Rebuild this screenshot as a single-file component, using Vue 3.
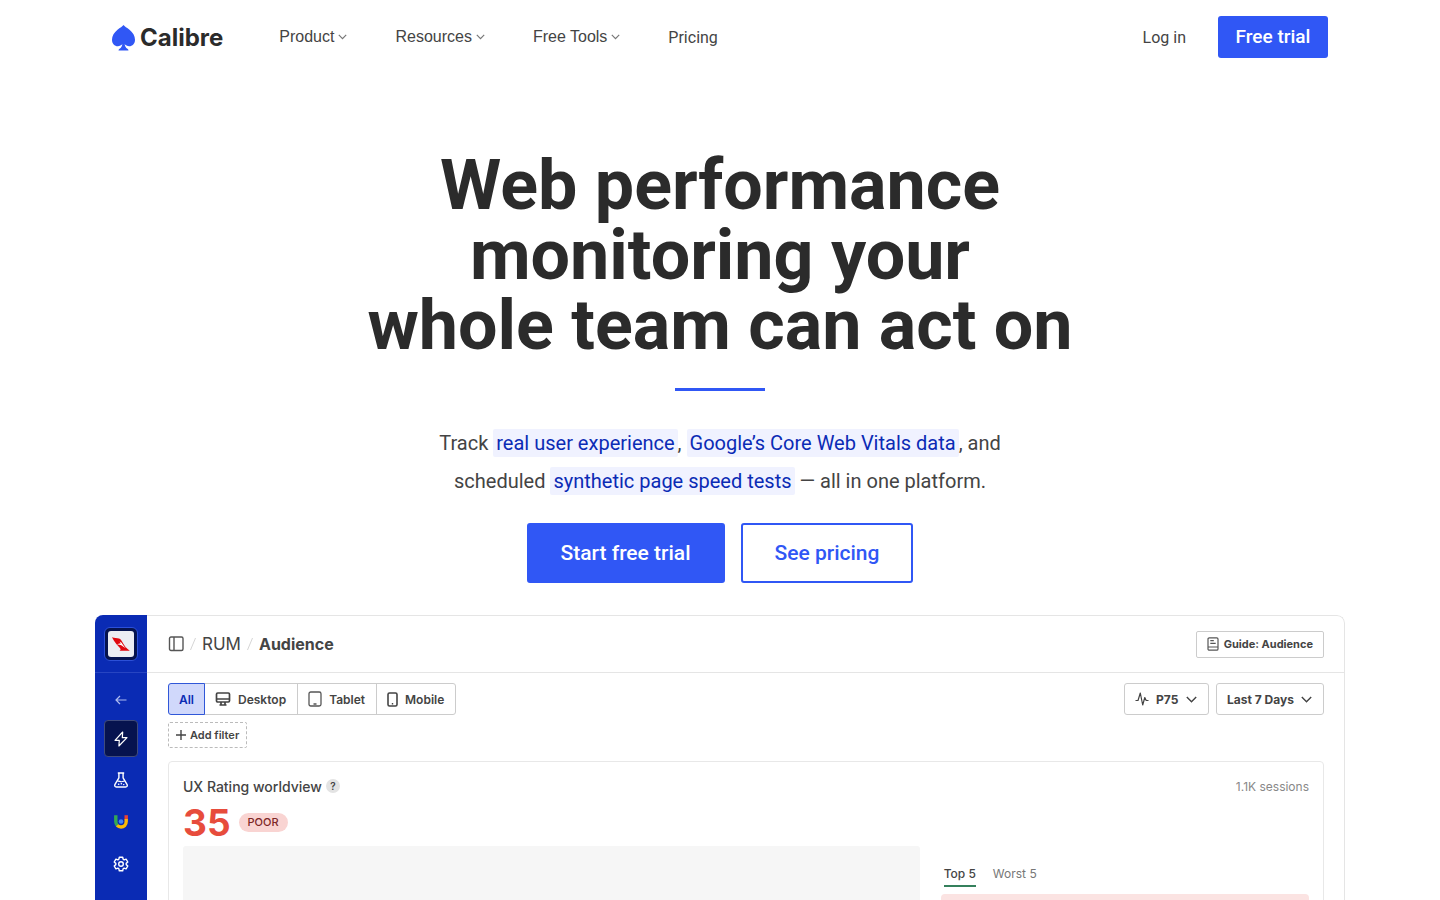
<script setup>
import { ref } from 'vue'

const menus = ['Product', 'Resources', 'Free Tools']
const devices = ['All', 'Desktop', 'Tablet', 'Mobile']
const device = ref('All')
const percentile = ref('P75')
const period = ref('Last 7 Days')
const tab = ref('Top 5')
</script>

<template>
  <div class="page">
    <header class="header">
      <a href="#" class="logo">
        <svg width="23" height="26" viewBox="0 0 23 26" fill="#3057f5">
          <path d="M11.5 0C10.5 1.5 8 2.7 5.5 4.8 2.200 7.600 0 11 0 14.700c0 4 2.600 6.500 5.800 6.500 1.900 0 3.500-.8 4.500-2.100-.1 2-1.100 3.900-2.700 4.700-.7.400-1.100.900-1.100 1.600h10c0-.7-.4-1.200-1.100-1.600-1.600-.8-2.600-2.700-2.700-4.700 1 1.300 2.600 2.100 4.500 2.100 3.200 0 5.800-2.500 5.800-6.500 0-3.700-2.200-7.100-5.500-9.900C15 2.700 12.500 1.500 11.500 0Z" />
        </svg>
        <span>Calibre</span>
      </a>
      <nav class="nav">
        <button v-for="item in menus" :key="item" type="button" class="menu" aria-haspopup="true">
          {{ item }}
          <svg width="9" height="6" viewBox="0 0 9 6" fill="none" stroke="#777"><path d="M.8.900 4.500 4.600 8.200.900" stroke-width="1.200" /></svg>
        </button>
        <a href="#" class="plain">Pricing</a>
      </nav>
      <a href="#" class="plain login">Log in</a>
      <a href="#" class="trial">Free trial</a>
    </header>

    <main>
      <section class="hero">
        <h1>Web performance<br>monitoring your<br>whole team can act on</h1>
        <hr>
        <p>
          Track <a href="#">real user experience</a>, <a href="#">Google’s Core Web Vitals data</a>, and<br>
          scheduled <a href="#">synthetic page speed tests</a> — all in one platform.
        </p>
        <div class="actions">
          <a href="#" class="cta filled">Start free trial</a>
          <a href="#" class="cta">See pricing</a>
        </div>
      </section>

      <section class="app">
        <aside class="side">
          <div class="team">
            <a href="#" class="team-logo" aria-label="Team">
              <svg width="26" height="26" viewBox="0 0 26 26">
                <path d="M4 6.200c2.500.8 5 .6 7 1.300 1.600.6 2.400 1.900 3.200 3.300 1.800 3.400 4 6.800 7.600 8.900H11.500c1.600-.6 1.300-1.700.2-2.900L8.300 13C6.600 11 5.200 8.600 4 6.200Z" fill="#e0070f" />
                <path d="M9 13.200c1.300-.2 2.400-.9 3.800-.8l-1.200-1.900c1.200.5 2.200 1.500 2.900 2.700 1 1.500 2.200 2.900 3.500 4-1.700-.7-3-1.900-4.300-2.700-1.500-.8-3.200-.8-4.700-1.300Z" fill="#fff" />
              </svg>
            </a>
          </div>
          <nav class="side-nav">
            <a href="#" class="back" aria-label="Back">
              <svg width="12" height="10" viewBox="0 0 12 10" fill="none" stroke="#aebcf0" stroke-width="1.200"><path d="M11.500 5H1M5 1 1 5l4 4" /></svg>
            </a>
            <a href="#" class="active" aria-label="Real user metrics">
              <svg width="14" height="16" viewBox="0 0 14 16" fill="none" stroke="#fff" stroke-width="1.200" stroke-linejoin="round"><path d="M8.700 1 1 9.300h4.300L4.900 15 13 6.700H8.300L8.700 1Z" /></svg>
            </a>
            <a href="#" aria-label="Synthetic tests">
              <svg width="14" height="16" viewBox="0 0 14 16" fill="none" stroke="#fff" stroke-width="1.400" stroke-linejoin="round">
                <path d="M3.800 1h6.400M4.900 1v4.800L1 12.400c-.7 1.400 0 2.600 1.300 2.600h9.400c1.300 0 2-1.200 1.300-2.600L9.100 5.800V1" />
                <path d="M3.400 9.200c1.800-.6 3 .9 4.700.4.900-.3 1.600-.6 2.500-.4" stroke-width="1.100" />
                <path d="M4.500 12.300h.3M7.200 11.800h.3M9.600 12.600h.2" stroke-linecap="round" />
              </svg>
            </a>
            <a href="#" aria-label="Chrome UX report">
              <svg width="16" height="16" viewBox="0 0 16 16" fill="none" stroke-width="3.400">
                <path d="M2.800 1.200v6.300c0 1.700.6 3 1.600 4" stroke="#34a853" />
                <path d="M13.200 1.200v4.300" stroke="#ea4335" />
                <path d="M13.200 5v2.500c0 3.300-2.300 5.500-5.200 5.500-1.600 0-2.900-.6-3.900-1.600" stroke="#fbbc04" />
                <circle cx="8" cy="7.500" r="2.300" fill="#4285f4" />
              </svg>
            </a>
            <a href="#" aria-label="Settings">
              <svg width="16" height="16" viewBox="0 0 16 16" fill="none" stroke="#fff" stroke-width="1.400" stroke-linejoin="round">
                <path d="M6.300 1.200h3.400l.4 2 1 .6 2-.7 1.700 2.900-1.600 1.400v1.200l1.600 1.400-1.700 2.900-2-.7-1 .6-.4 2H6.300l-.4-2-1-.6-2 .7L1.200 10l1.600-1.400V7.400L1.200 6l1.700-2.900 2 .7 1-.6.4-2Z" />
                <circle cx="8" cy="8" r="2.300" />
              </svg>
            </a>
          </nav>
        </aside>

        <div class="content">
          <div class="topbar">
            <button type="button" class="toggle" aria-label="Toggle sidebar">
              <svg width="16" height="16" viewBox="0 0 16 16" fill="none" stroke="#555" stroke-width="1.400"><rect x="1.500" y="1" width="13.500" height="13.500" rx="1.500" /><path d="M6 1v13.500" /></svg>
            </button>
            <svg class="slash" width="8" height="14" viewBox="0 0 8 14" stroke="#d5d5d5"><path d="m1.500 13 5-12" /></svg>
            <a href="#" class="crumb">RUM</a>
            <svg class="slash" width="8" height="14" viewBox="0 0 8 14" stroke="#d5d5d5"><path d="m1.500 13 5-12" /></svg>
            <h2>Audience</h2>
            <a href="#" class="guide">
              <svg width="12" height="14" viewBox="0 0 12 14" fill="none" stroke="#555" stroke-width="1.200">
                <rect x="1" y=".8" width="10" height="12.400" rx="1.300" /><path d="M1 10h10M3.300 3.600h3.500M3.300 6.400h5.400" />
              </svg>
              Guide: Audience
            </a>
          </div>

          <div class="filters">
            <div class="segments">
              <button v-for="d in devices" :key="d" type="button" :class="{ on: device === d }" @click="device = d">
                <svg v-if="d === 'Desktop'" width="16" height="14" viewBox="0 0 16 14" fill="none" stroke="#444" stroke-width="1.700"><rect x="1.500" y="1" width="13" height="9" rx="1.200" /><path d="M1.500 7h13M6 10v2.500M10 10v2.500M4.500 13h7" /></svg>
                <svg v-if="d === 'Tablet'" width="14" height="16" viewBox="0 0 14 16" fill="none" stroke="#555" stroke-width="1.300"><rect x="1" y="1" width="12" height="14" rx="1.800" /><path d="M5.500 13h3" /></svg>
                <svg v-if="d === 'Mobile'" width="11" height="15" viewBox="0 0 11 15" fill="none" stroke="#444" stroke-width="1.600"><rect x="1" y="1" width="9" height="13" rx="1.500" /><path d="M4.800 11.800h1.400" /></svg>
                {{ d }}
              </button>
            </div>
            <div class="selects">
              <div class="select">
                <svg width="14" height="14" viewBox="0 0 14 14" fill="none" stroke="#444" stroke-width="1.200" stroke-linejoin="round"><path d="M.5 8.500H3L5.300 1l2.400 12L9.800 5.500l1.400 3h2.300" /></svg>
                <select v-model="percentile" aria-label="Percentile">
                  <option>P75</option>
                </select>
                <svg width="11" height="7" viewBox="0 0 11 7" fill="none" stroke="#444" stroke-width="1.400"><path d="m.8 1 4.700 4.800L10.200 1" /></svg>
              </div>
              <div class="select">
                <select v-model="period" aria-label="Period">
                  <option>Last 7 Days</option>
                </select>
                <svg width="11" height="7" viewBox="0 0 11 7" fill="none" stroke="#444" stroke-width="1.400"><path d="m.8 1 4.700 4.800L10.200 1" /></svg>
              </div>
            </div>
          </div>

          <button type="button" class="add">
            <svg width="10" height="10" viewBox="0 0 10 10" stroke="#444" stroke-width="1.400"><path d="M5 0v10M0 5h10" /></svg>
            Add filter
          </button>

          <div class="card">
            <div class="card-head">
              <h3>UX Rating worldview</h3>
              <button type="button" class="help">?</button>
              <span class="sessions">1.1K sessions</span>
            </div>
            <div class="score">
              <strong>35</strong>
              <span class="badge">POOR</span>
            </div>
            <div class="body">
              <div class="map"></div>
              <div class="ranking">
                <div class="tabs">
                  <button v-for="t in ['Top 5', 'Worst 5']" :key="t" type="button" :class="{ on: tab === t }" @click="tab = t">{{ t }}</button>
                </div>
                <div class="row"></div>
              </div>
            </div>
          </div>
        </div>
      </section>
    </main>
  </div>
</template>

<style>
body {
  background: #fff;
}
</style>

<style scoped>
* {
  box-sizing: border-box;
}

.page {
  color: #444;
  font-family: Roboto, "Liberation Sans", sans-serif;
  font-size: 16px;
}

a {
  color: inherit;
  text-decoration: none;
}

button,
select {
  margin: 0;
  padding: 0;
  border: 0;
  background: none;
  color: inherit;
  font: inherit;
  cursor: pointer;
}

svg {
  display: block;
  flex: none;
}

/* header */
.header {
  display: flex;
  align-items: center;
  height: 74px;
  padding: 0 112px;
}

.logo {
  display: flex;
  align-items: center;
  gap: 5px;
  padding-top: 2px;
  color: #2b2b2b;
  font: 700 24px/32px Inter, sans-serif;
}

.nav {
  display: flex;
  align-items: center;
  gap: 48px;
  margin-left: 56px;
}

.menu {
  display: flex;
  align-items: center;
  gap: 4px;
  font: 16px/20px "Liberation Sans", Arial, sans-serif;
}

.plain {
  padding-top: 2px;
  line-height: 20px;
}

.login {
  margin-left: auto;
}

.trial {
  margin-left: 32px;
  width: 110px;
  border-radius: 3px;
  background: #3057f5;
  color: #fff;
  font-size: 19px;
  font-weight: 500;
  line-height: 42px;
  text-align: center;
}

/* hero */
.hero {
  display: flex;
  flex-direction: column;
  align-items: center;
  padding: 76px 0 32px;
  text-align: center;
}

h1 {
  margin: 0;
  color: #2b2b2b;
  font-size: 70px;
  font-weight: 700;
  line-height: 70px;
}

hr {
  width: 90px;
  height: 3px;
  margin: 28px 0 33px;
  border: 0;
  background: #3057f5;
}

.hero p {
  margin: 0;
  font-size: 20px;
  line-height: 38px;
}

.hero p a {
  padding: 2px 3px;
  border-radius: 2px;
  background: #f0f2ff;
  color: #0b2bb5;
}

.actions {
  display: flex;
  gap: 16px;
  margin-top: 23px;
}

.cta {
  padding: 0 32px;
  border: 2px solid #3057f5;
  border-radius: 3px;
  color: #3057f5;
  font-size: 21px;
  font-weight: 500;
  line-height: 56px;
}

.filled {
  background: #3057f5;
  color: #fff;
}

/* product preview */
.app {
  display: flex;
  max-width: 1250px;
  margin: 0 auto;
  overflow: hidden;
  border-radius: 8px 8px 0 0;
  font-family: Inter, sans-serif;
  font-size: 12px;
  font-weight: 600;
}

.side {
  width: 52px;
  background: #0a2bb4;
}

.team {
  display: flex;
  align-items: center;
  justify-content: center;
  height: 58px;
  border-bottom: 1px solid #2745c2;
}

.team-logo {
  padding: 3px;
  border: 1px solid #2c50d8;
  border-radius: 6px;
  background: #06134f;
}

.team-logo svg {
  border-radius: 3px;
  background: #ecedf3;
}

.side-nav {
  display: flex;
  flex-direction: column;
  align-items: center;
  gap: 4px;
  padding-top: 11px;
}

.side-nav a {
  display: flex;
  align-items: center;
  justify-content: center;
  width: 34px;
  height: 38px;
}

.side-nav .back {
  height: 32px;
}

.side-nav .active {
  height: 37px;
  border: 1px solid #3f4b7c;
  border-radius: 4px;
  background: #06134f;
}

.content {
  flex: 1;
  min-width: 0;
  border: 1px solid #e5e5e5;
  border-width: 1px 1px 0 0;
  border-radius: 0 8px 0 0;
}

.topbar {
  display: flex;
  align-items: center;
  height: 57px;
  padding: 0 20px 0 21px;
  border-bottom: 1px solid #e5e5e5;
}

.slash {
  margin: 0 5px;
}

.crumb {
  font-size: 17px;
  font-weight: 400;
}

h2 {
  margin: 0;
  font-size: 16px;
  font-weight: 700;
}

.guide {
  display: flex;
  align-items: center;
  gap: 5px;
  height: 27px;
  margin-left: auto;
  padding: 0 10px;
  border: 1px solid #ccc;
  border-radius: 2px;
  font-size: 11px;
  font-weight: 700;
}

.filters {
  display: flex;
  justify-content: space-between;
  padding: 10px 20px 0 21px;
}

.segments {
  display: flex;
  height: 32px;
}

.segments button {
  display: flex;
  align-items: center;
  gap: 7px;
  margin-right: -1px;
  padding: 0 11px 0 10px;
  border: 1px solid #ccc;
}

.segments button:first-child {
  padding: 0 10px;
  border-radius: 3px 0 0 3px;
}

.segments button:last-child {
  margin-right: 0;
  border-radius: 0 3px 3px 0;
}

.segments .on {
  z-index: 1;
  border-color: #3057d8;
  background: #d0d8fb;
  color: #0a2bb4;
}

.selects {
  display: flex;
  gap: 7px;
}

.select {
  display: flex;
  align-items: center;
  gap: 7px;
  height: 32px;
  padding: 0 11px 0 10px;
  border: 1px solid #ccc;
  border-radius: 3px;
  font-weight: 700;
}

.select select {
  appearance: none;
}

.add {
  display: flex;
  align-items: center;
  gap: 4px;
  height: 26px;
  margin: 7px 0 13px 21px;
  padding: 0 7px;
  border: 1px dashed #bbb;
  border-radius: 2px;
  font-size: 11px;
  font-weight: 600;
}

.card {
  margin: 0 20px 0 21px;
  padding: 14px;
  border: 1px solid #e8e8e8;
  border-radius: 4px;
}

.card-head {
  display: flex;
  align-items: center;
  height: 20px;
}

h3 {
  margin: 0;
  font-size: 14px;
  font-weight: 500;
}

.help {
  width: 14px;
  height: 14px;
  margin-left: 4px;
  border-radius: 50%;
  background: #e3e3e3;
  font-size: 10px;
  line-height: 14px;
}

.sessions {
  margin-left: auto;
  color: #888;
  font-weight: 400;
}

.score {
  display: flex;
  align-items: center;
  gap: 8px;
  height: 50px;
  padding-top: 3px;
}

.score strong {
  color: #e74c3c;
  font-size: 37px;
  font-weight: 700;
}

.badge {
  padding: 0 9px;
  border-radius: 10px;
  background: #f9d4d2;
  color: #7d2626;
  font-size: 11px;
  font-weight: 500;
  line-height: 19px;
}

.body {
  display: grid;
  grid-template-columns: 2fr 1fr;
  gap: 21px;
}

.map {
  height: 360px;
  border-radius: 3px;
  background: #f6f6f6;
}

.tabs {
  display: flex;
  gap: 17px;
  padding: 16px 3px 7px;
}

.tabs button {
  border-bottom: 2px solid transparent;
  color: #777;
  font-weight: 400;
  line-height: 23px;
}

.tabs .on {
  border-color: #35805c;
  color: #444;
  font-weight: 500;
}

.row {
  height: 36px;
  border-radius: 4px;
  background: #fbe3e2;
}
</style>
